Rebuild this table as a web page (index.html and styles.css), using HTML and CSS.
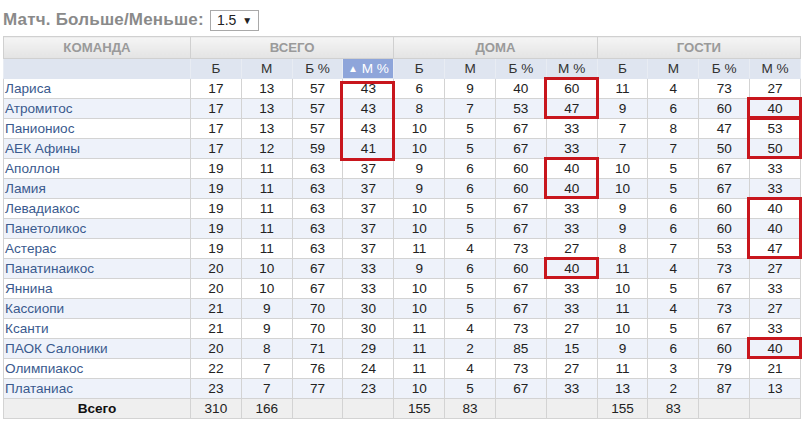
FILE: index.html
```html
<!DOCTYPE html>
<html>
<head>
<meta charset="utf-8">
<link rel="stylesheet" href="styles.css">
</head>
<body>
<div class="page">
  <div class="title-row">
    <span class="title">Матч. Больше/Меньше:</span>
    <span class="select">1.5 <span class="caret">▼</span></span>
  </div>
  <table class="stats">
    <colgroup><col class="c-name"><col span="12"></colgroup>
    <thead>
      <tr class="h1">
        <th>КОМАНДА</th>
        <th colspan="4">ВСЕГО</th>
        <th colspan="4">ДОМА</th>
        <th colspan="4">ГОСТИ</th>
      </tr>
      <tr class="h2">
        <th></th>
        <th>Б</th><th>М</th><th>Б %</th><th class="sorted"><span class="tri">▲</span> М %</th>
        <th>Б</th><th>М</th><th>Б %</th><th>М %</th>
        <th>Б</th><th>М</th><th>Б %</th><th>М %</th>
      </tr>
    </thead>
    <tbody>
      <tr><td class="team">Лариса</td><td>17</td><td>13</td><td>57</td><td class="mk"><span class="box r4"></span>43</td><td>6</td><td>9</td><td>40</td><td class="mk"><span class="box r2"></span>60</td><td>11</td><td>4</td><td>73</td><td>27</td></tr>
      <tr><td class="team">Атромитос</td><td>17</td><td>13</td><td>57</td><td>43</td><td>8</td><td>7</td><td>53</td><td>47</td><td>9</td><td>6</td><td>60</td><td class="mk"><span class="box r1"></span>40</td></tr>
      <tr><td class="team">Паниониос</td><td>17</td><td>13</td><td>57</td><td>43</td><td>10</td><td>5</td><td>67</td><td>33</td><td>7</td><td>8</td><td>47</td><td class="mk"><span class="box r2"></span>53</td></tr>
      <tr><td class="team">АЕК Афины</td><td>17</td><td>12</td><td>59</td><td>41</td><td>10</td><td>5</td><td>67</td><td>33</td><td>7</td><td>7</td><td>50</td><td>50</td></tr>
      <tr><td class="team">Аполлон</td><td>19</td><td>11</td><td>63</td><td>37</td><td>9</td><td>6</td><td>60</td><td class="mk"><span class="box r2"></span>40</td><td>10</td><td>5</td><td>67</td><td>33</td></tr>
      <tr><td class="team">Ламия</td><td>19</td><td>11</td><td>63</td><td>37</td><td>9</td><td>6</td><td>60</td><td>40</td><td>10</td><td>5</td><td>67</td><td>33</td></tr>
      <tr><td class="team">Левадиакос</td><td>19</td><td>11</td><td>63</td><td>37</td><td>10</td><td>5</td><td>67</td><td>33</td><td>9</td><td>6</td><td>60</td><td class="mk"><span class="box r3"></span>40</td></tr>
      <tr><td class="team">Панетоликос</td><td>19</td><td>11</td><td>63</td><td>37</td><td>10</td><td>5</td><td>67</td><td>33</td><td>9</td><td>6</td><td>60</td><td>40</td></tr>
      <tr><td class="team">Астерас</td><td>19</td><td>11</td><td>63</td><td>37</td><td>11</td><td>4</td><td>73</td><td>27</td><td>8</td><td>7</td><td>53</td><td>47</td></tr>
      <tr><td class="team">Панатинаикос</td><td>20</td><td>10</td><td>67</td><td>33</td><td>9</td><td>6</td><td>60</td><td class="mk"><span class="box r1"></span>40</td><td>11</td><td>4</td><td>73</td><td>27</td></tr>
      <tr><td class="team">Яннина</td><td>20</td><td>10</td><td>67</td><td>33</td><td>10</td><td>5</td><td>67</td><td>33</td><td>10</td><td>5</td><td>67</td><td>33</td></tr>
      <tr><td class="team">Кассиопи</td><td>21</td><td>9</td><td>70</td><td>30</td><td>10</td><td>5</td><td>67</td><td>33</td><td>11</td><td>4</td><td>73</td><td>27</td></tr>
      <tr><td class="team">Ксанти</td><td>21</td><td>9</td><td>70</td><td>30</td><td>11</td><td>4</td><td>73</td><td>27</td><td>10</td><td>5</td><td>67</td><td>33</td></tr>
      <tr><td class="team">ПАОК Салоники</td><td>20</td><td>8</td><td>71</td><td>29</td><td>11</td><td>2</td><td>85</td><td>15</td><td>9</td><td>6</td><td>60</td><td class="mk"><span class="box r1"></span>40</td></tr>
      <tr><td class="team">Олимпиакос</td><td>22</td><td>7</td><td>76</td><td>24</td><td>11</td><td>4</td><td>73</td><td>27</td><td>11</td><td>3</td><td>79</td><td>21</td></tr>
      <tr><td class="team">Платаниас</td><td>23</td><td>7</td><td>77</td><td>23</td><td>10</td><td>5</td><td>67</td><td>33</td><td>13</td><td>2</td><td>87</td><td>13</td></tr>
    </tbody>
    <tfoot>
      <tr><td class="total-label">Всего</td><td>310</td><td>166</td><td></td><td></td><td>155</td><td>83</td><td></td><td></td><td>155</td><td>83</td><td></td><td></td></tr>
    </tfoot>
  </table>
</div>
</body>
</html>
```
FILE: styles.css
```css
* { box-sizing: border-box; }
html, body { margin: 0; padding: 0; background: #fff; }
body { font-family: "Liberation Sans", Arial, sans-serif; color: #222; }
.page { padding: 0 3px; width: 805px; }
.title-row { display: flex; align-items: center; height: 36px; padding-top: 6px; padding-bottom: 2px; }
.title { font-weight: bold; font-size: 17px; color: #8a8a8a; letter-spacing: 0.2px; }
.select { margin-left: 6px; display: inline-flex; align-items: center; height: 21px; width: 49px; padding: 0 0 0 6px; border: 1px solid #a9a9a9; font-size: 14px; color: #222; background: #fff; }
.select .caret { font-size: 10px; margin-left: 6px; }
.stats { width: 798px; border-collapse: collapse; table-layout: fixed; font-size: 13.6px; border: 1px solid #c8c8c8; }
.stats col.c-name { width: 187px; }
.stats th, .stats td { border: 1px solid #d3d3d3; padding: 0; text-align: center; height: 20px; line-height: 18px; white-space: nowrap; }
.h1 th { height: 22px; background: linear-gradient(#f5f5f5, #e3e3e3); color: #9a9a9a; font-size: 13.2px; font-weight: bold; border-color: #d0d0d0; }
.h2 th { background: #dfe5f0; color: #333; font-weight: normal; font-size: 13.6px; border-color: #dfe5f0 #e8ecf3; }
.h2 th.sorted { background: #8ea5da; color: #fff; }
.h2 .tri { font-size: 10px; vertical-align: 1px; }
tbody tr:nth-child(even) td { background: #eef2fa; }
tbody td.team { text-align: left; padding-left: 1px; color: #3a5a8e; }
tfoot td { background: #efefef; }
tfoot td.total-label { font-weight: bold; color: #111; }
td.mk { position: relative; }
.box { position: absolute; left: -3px; right: -2px; top: -2px; border: 3px solid #c8161d; pointer-events: none; }
.box.r1 { height: 22px; }
.box.r2 { height: 42px; }
.box.r3 { height: 62px; }
.box.r4 { height: 80px; top: 2px; }
```
